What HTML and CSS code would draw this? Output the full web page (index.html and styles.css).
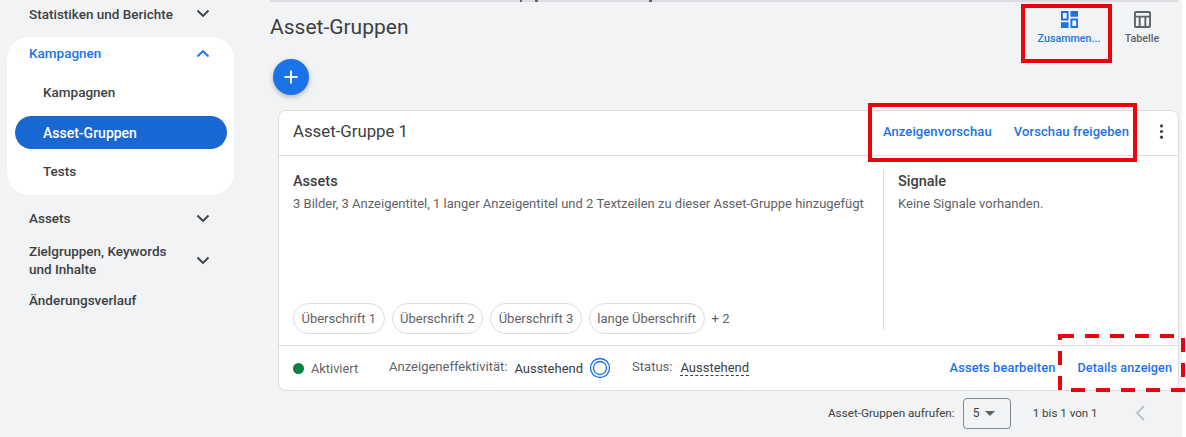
FILE: index.html
```html
<!DOCTYPE html>
<html lang="de">
<head>
<meta charset="utf-8">
<title>Asset-Gruppen</title>
<link rel="stylesheet" href="styles.css">
</head>
<body>
<div class="page">
  <nav class="sidebar">
    <div class="nav-row nav-first"><span>Statistiken und Berichte</span><svg class="chev" viewBox="0 0 14 9"><path d="M1.500 1.500 7 7l5.500-5.500"/></svg></div>
    <div class="group">
      <div class="nav-row nav-open"><span>Kampagnen</span><svg class="chev chev-blue" viewBox="0 0 14 9"><path d="M1.500 7.500 7 2l5.500 5.500"/></svg></div>
      <div class="sub">Kampagnen</div>
      <div class="sub sub-active">Asset-Gruppen</div>
      <div class="sub">Tests</div>
    </div>
    <div class="nav-row nav-assets"><span>Assets</span><svg class="chev" viewBox="0 0 14 9"><path d="M1.500 1.500 7 7l5.500-5.500"/></svg></div>
    <div class="nav-row nav-two"><span>Zielgruppen, Keywords<br>und Inhalte</span><svg class="chev" viewBox="0 0 14 9"><path d="M1.500 1.500 7 7l5.500-5.500"/></svg></div>
    <div class="nav-row nav-last"><span>Änderungsverlauf</span></div>
  </nav>
  <main class="main">
    <div class="topline"><i class="tick tick-a"></i><i class="tick tick-b"></i><i class="tick tick-c"></i></div>
    <header class="head">
      <h1 class="title">Asset-Gruppen</h1>
      <div class="views">
        <div class="view view-active">
          <svg class="view-icon" viewBox="0 0 18 18"><path fill="#1a73e8" fill-rule="evenodd" d="M0 0h8v10H0zM2 2v6h4V2zM10 0h8v6h-8zM0 12h8v6H0zM10 8h8v10h-8zM12 10v6h4v-6z"/></svg>
          <span>Zusammen...</span>
        </div>
        <div class="view view-table">
          <svg class="view-icon" viewBox="0 0 18 18"><path fill="#5f6368" fill-rule="evenodd" d="M2 0h14a2 2 0 0 1 2 2v14a2 2 0 0 1-2 2H2a2 2 0 0 1-2-2V2a2 2 0 0 1 2-2zM2 2v3h14V2zM2 7v9h3V7zM7 7v9h4V7zM13 7v9h3V7z"/></svg>
          <span>Tabelle</span>
        </div>
      </div>
      <div class="mark mark-view"></div>
    </header>
    <div class="fab"><svg viewBox="0 0 16 16"><path d="M8 1.500v13M1.500 8h13"/></svg></div>
    <section class="card">
      <div class="card-head">
        <div class="card-title">Asset-Gruppe 1</div>
        <div class="card-links">
          <span class="link">Anzeigenvorschau</span>
          <span class="link">Vorschau freigeben</span>
        </div>
        <svg class="more" viewBox="0 0 4 16"><circle cx="2" cy="2" r="1.700"/><circle cx="2" cy="8" r="1.700"/><circle cx="2" cy="14" r="1.700"/></svg>
        <div class="mark mark-links"></div>
      </div>
      <div class="card-body">
        <div class="assets">
          <h2 class="sec-title">Assets</h2>
          <p class="sec-text">3 Bilder, 3 Anzeigentitel, 1 langer Anzeigentitel und 2 Textzeilen zu dieser Asset-Gruppe hinzugefügt</p>
          <div class="chips">
            <span class="chip">Überschrift 1</span>
            <span class="chip">Überschrift 2</span>
            <span class="chip">Überschrift 3</span>
            <span class="chip">lange Überschrift</span>
            <span class="chip-more">+ 2</span>
          </div>
        </div>
        <div class="signals">
          <h2 class="sec-title">Signale</h2>
          <p class="sec-text">Keine Signale vorhanden.</p>
        </div>
      </div>
      <div class="card-foot">
        <i class="dot"></i><span class="state">Aktiviert</span>
        <span class="lbl lbl-eff">Anzeigeneffektivität:</span><span class="val">Ausstehend</span>
        <svg class="ring" viewBox="0 0 22 22"><circle cx="11" cy="11" r="9.500"/><circle cx="11" cy="11" r="6.500"/></svg>
        <span class="lbl lbl-status">Status:</span><span class="val val-dash">Ausstehend</span>
        <span class="link link-edit">Assets bearbeiten</span>
        <span class="link link-details">Details anzeigen</span>
      </div>
      <svg class="mark-dash" viewBox="0 0 127 58"><rect x="2" y="2" width="123" height="54"/></svg>
    </section>
    <footer class="pager">
      <span>Asset-Gruppen aufrufen:</span>
      <div class="select"><span>5</span><i class="caret"></i></div>
      <span class="range">1 bis 1 von 1</span>
      <svg class="prev" viewBox="0 0 10 16"><path d="M9 1 2 8l7 7"/></svg>
    </footer>
  </main>
  <div class="edge"></div>
</div>
</body>
</html>
```
FILE: styles.css
```css
* { box-sizing: border-box; }
html, body { margin: 0; height: 100%; }
body { background: #f1f3f4; font-family: Roboto, "Liberation Sans", sans-serif; color: #3c4043; overflow: hidden; }
.page { display: flex; width: 1186px; height: 437px; overflow: hidden; }
.edge { width: 4px; flex: none; background: #fff; }

.sidebar { width: 270px; flex: none; padding-left: 7px; font-size: 13.500px; font-weight: 500; }
.nav-row { display: flex; align-items: center; justify-content: space-between; padding: 0 24px 0 22px; width: 227px; white-space: nowrap; }
.nav-first { height: 27px; }
.group { background: #fff; border-radius: 22px; width: 227px; height: 158px; margin-top: 10px; }
.nav-open { height: 32px; color: #1a73e8; margin-bottom: 6px; }
.sub { height: 33px; margin: 0 7px 0 8px; padding-left: 28px; display: flex; align-items: center; }
.sub-active { background: #1967d2; color: #fff; border-radius: 17px; margin-top: 8px; margin-bottom: 5px; font-size: 14px; }
.nav-assets { height: 24px; margin-top: 11px; }
.nav-two { height: 36px; margin-top: 12px; line-height: 18px; }
.nav-last { height: 24px; margin-top: 10px; }
.chev { width: 14px; height: 9px; fill: none; stroke: #3c4043; stroke-width: 1.800; flex: none; }
.chev-blue { stroke: #1a73e8; }

.main { flex: 1; position: relative; }
.topline { height: 2px; margin-right: 4px; background: #dadce0; position: relative; }
.tick { position: absolute; top: 0; width: 3px; height: 2px; background: #5f6368; }
.tick-a { left: 250px; width: 2px; }
.tick-b { left: 265px; }
.tick-c { left: 379px; }
.head { display: flex; justify-content: space-between; height: 57px; position: relative; }
.title { margin: 13px 0 0; font-size: 21px; font-weight: 400; color: #3c4043; line-height: 24px; }
.views { display: flex; font-size: 10.700px; font-weight: 500; color: #5f6368; margin-right: 18px; }
.view { display: flex; flex-direction: column; align-items: center; width: 70px; padding-top: 9px; white-space: nowrap; }
.view-table { width: 44px; margin-left: 16px; }
.view-active { color: #1a73e8; }
.view-icon { width: 17px; height: 17px; margin-bottom: 4px; }
.fab { width: 36px; height: 36px; border-radius: 50%; background: #1a73e8; margin-left: 3px; display: flex; align-items: center; justify-content: center; box-shadow: 0 2px 5px rgba(60,64,67,.35); }
.fab svg { width: 16px; height: 16px; fill: none; stroke: #fff; stroke-width: 2; }

.mark { position: absolute; border: 4px solid #e8050d; pointer-events: none; }
.mark-view { left: 751px; top: 2px; width: 91px; height: 59px; }
.mark-links { left: 589px; top: -8px; width: 269px; height: 59px; }
.mark-dash { position: absolute; left: 779px; top: 223px; width: 127px; height: 58px; fill: none; stroke: #e8050d; stroke-width: 4; stroke-dasharray: 14 11; overflow: visible; }

.card { position: relative; margin: 15px 0 0 8px; width: 901px; height: 281px; background: #fff; border: 1px solid #dadce0; border-radius: 8px; }
.card-head { position: relative; display: flex; align-items: center; height: 45px; border-bottom: 1px solid #dadce0; padding: 0 14px 3px; }
.card-title { font-size: 16.800px; color: #3c4043; flex: 1; margin-bottom: 2px; }
.card-links { display: flex; gap: 22px; }
.link { font-size: 13px; font-weight: 500; letter-spacing: .1px; color: #1a73e8; white-space: nowrap; }
.more { width: 5px; height: 15px; margin: 0 0 0 30px; fill: #3c4043; }
.card-body { display: flex; height: 189px; padding-top: 14px; }
.assets { width: 605px; padding: 3px 0 0 14px; border-right: 1px solid #dadce0; display: flex; flex-direction: column; height: 160px; }
.signals { padding: 3px 0 0 14px; }
.sec-title { margin: 0; font-size: 14.500px; font-weight: 500; color: #3c4043; line-height: 17px; }
.sec-text { margin: 6px 0 0; font-size: 13px; color: #5f6368; line-height: 16px; white-space: nowrap; }
.chips { display: flex; align-items: center; gap: 7px; margin-top: auto; margin-bottom: -4px; }
.chip { height: 31px; border: 1px solid #dadce0; border-radius: 16px; padding: 0 7.500px; font-size: 13px; color: #5f6368; display: flex; align-items: center; white-space: nowrap; }
.chip-more { font-size: 13px; color: #5f6368; }
.card-foot { display: flex; align-items: center; height: 45px; padding-left: 14px; border-top: 1px solid #dadce0; font-size: 12.800px; color: #5f6368; white-space: nowrap; }
.dot { width: 11px; height: 11px; border-radius: 50%; background: #0b8043; }
.state { margin-left: 7px; }
.lbl { font-size: 13px; position: relative; top: -2px; }
.lbl-eff { margin-left: 31px; }
.val { margin-left: 7px; color: #3c4043; font-size: 13px; }
.ring { width: 22px; height: 22px; margin-left: 6px; fill: none; stroke: #1a73e8; stroke-width: 1.300; }
.lbl-status { margin-left: 21px; }
.val-dash { margin-left: 8px; border-bottom: 1px dashed #3c4043; line-height: 15px; }
.link-edit { margin-left: auto; font-size: 12.900px; position: relative; top: -1px; }
.link-details { margin-left: 22px; margin-right: 6px; font-size: 12.600px; position: relative; top: -1px; }

.pager { display: flex; align-items: center; height: 40px; margin-top: 2px; padding-left: 558px; font-size: 11.700px; color: #3c4043; white-space: nowrap; }
.select { width: 48px; height: 31px; margin-left: 8px; border: 1px solid #80868b; border-radius: 4px; display: flex; align-items: center; padding-left: 9px; font-size: 12px; gap: 6px; }
.caret { width: 0; height: 0; border: 5px solid transparent; border-top-color: #5f6368; border-bottom: 0; }
.range { margin-left: 22px; font-size: 11.600px; }
.prev { width: 10px; height: 16px; margin-left: 37px; fill: none; stroke: #bdc1c6; stroke-width: 1.800; }
```
